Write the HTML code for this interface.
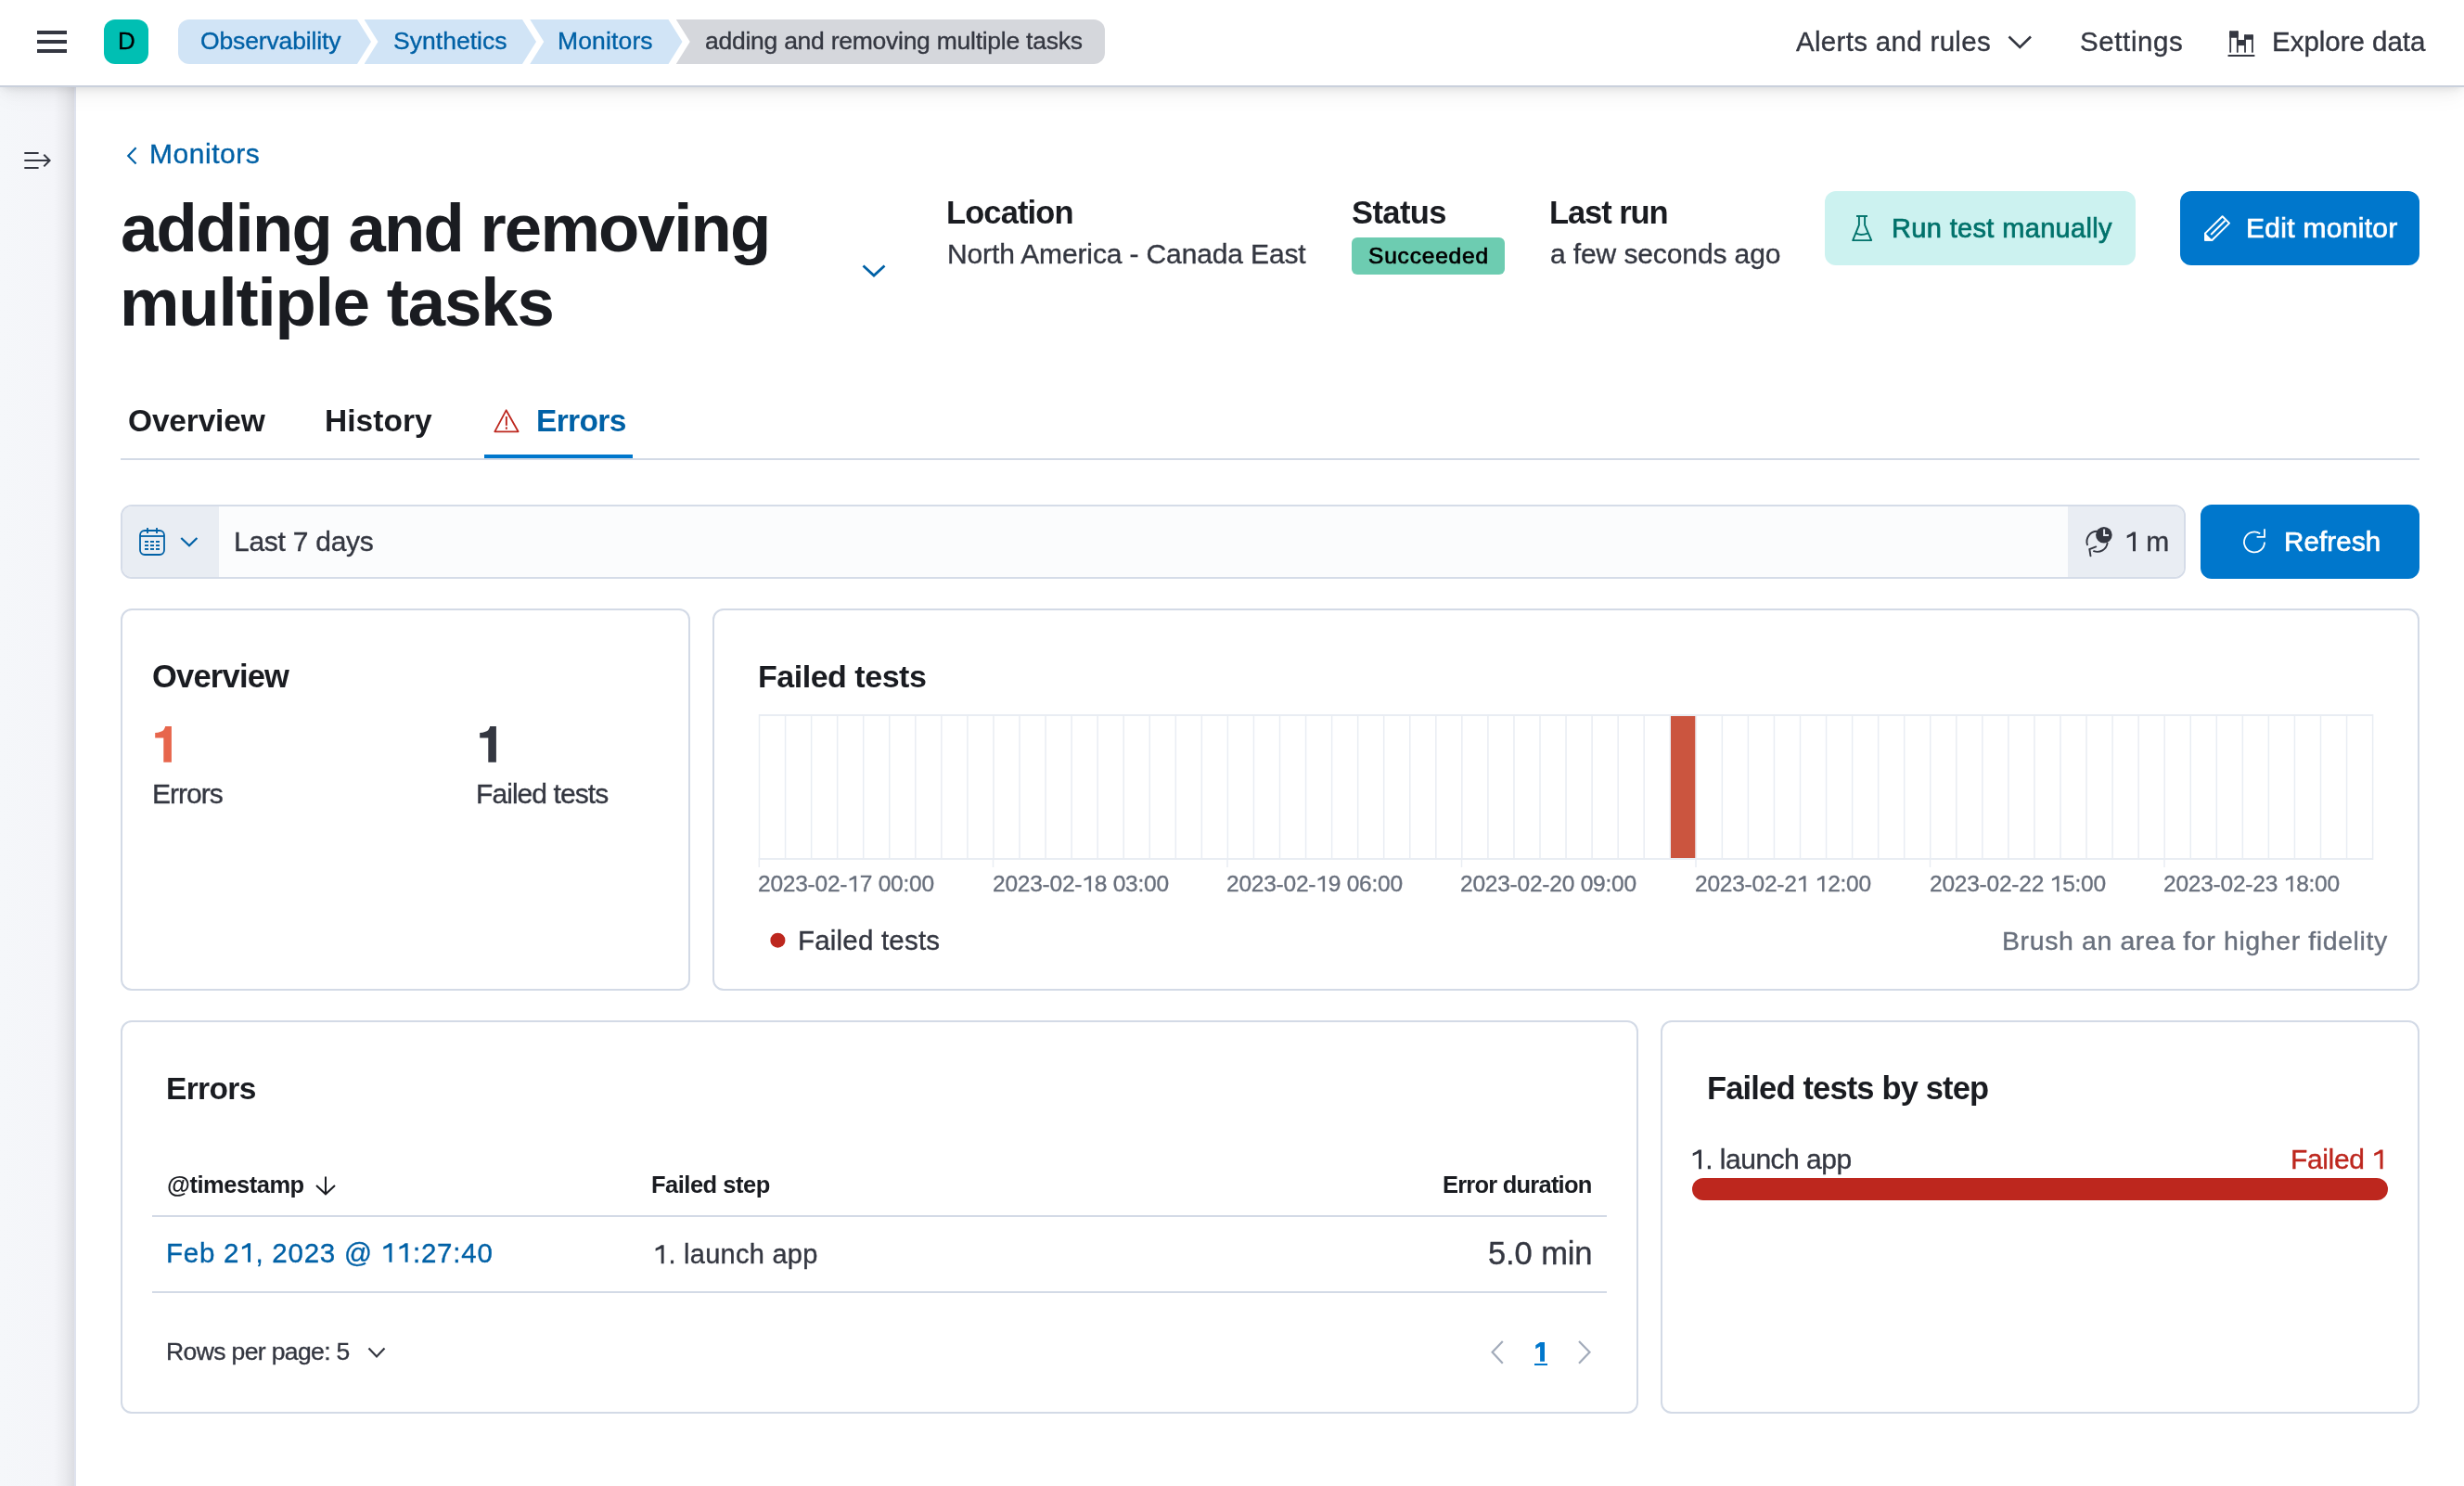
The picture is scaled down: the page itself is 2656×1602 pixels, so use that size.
<!DOCTYPE html>
<html><head><meta charset="utf-8"><title>Synthetics - Errors</title>
<style>
html,body{margin:0;padding:0;background:#ffffff;overflow:hidden}
#root{position:relative;width:2656px;height:1602px;overflow:hidden;background:#ffffff;font-family:"Liberation Sans",sans-serif}
@media (max-width:1500px){#root{zoom:0.5}}
.a{position:absolute}
.t{position:absolute;white-space:nowrap;font-family:"Liberation Sans",sans-serif;will-change:transform}
.one,.oneb{position:relative;color:transparent;-webkit-text-stroke:0}
.one::after,.oneb::after{content:"";position:absolute;left:0;top:0;width:0.56em;height:1em;background:var(--c)}
.one::after{clip-path:polygon(0.30em 0.215em,0.40em 0.215em,0.40em 0.905em,0.30em 0.905em,0.30em 0.345em,0.09em 0.44em,0.09em 0.34em,0.22em 0.28em)}
.oneb::after{clip-path:polygon(0.235em 0.215em,0.37em 0.215em,0.37em 0.905em,0.235em 0.905em,0.235em 0.37em,0.07em 0.37em,0.07em 0.29em,0.16em 0.275em,0.21em 0.23em)}
svg.ov{position:absolute;left:0;top:0;z-index:5;pointer-events:none}
</style></head><body><div id="root">
<div class="a" style="left:0px;top:93px;width:82px;height:1509px;background:linear-gradient(to right,#f5f7fa 0,#f4f5f9 58px,#eaebef 70px,#dcdde2 80px);border-right:2px solid #dfe3ee;box-sizing:border-box"></div>
<div class="a" style="left:0px;top:0px;width:2656px;height:94px;background:#ffffff;border-bottom:2px solid #c9d0dc;box-sizing:border-box;box-shadow:0 2px 8px -2px rgba(0,0,0,0.10),0 5px 16px -2px rgba(0,0,0,0.06),0 12px 24px -2px rgba(0,0,0,0.04);z-index:2"></div>
<div class="a" style="left:40px;top:33px;width:32px;height:4px;background:#343741;z-index:3"></div>
<div class="a" style="left:40px;top:43px;width:32px;height:4px;background:#343741;z-index:3"></div>
<div class="a" style="left:40px;top:53px;width:32px;height:4px;background:#343741;z-index:3"></div>
<div class="a" style="left:112px;top:21px;width:48px;height:48px;background:#00bfb3;border-radius:12px;z-index:3"></div>
<div class="a" style="left:192px;top:21px;width:208px;height:48px;background:#d1e4f6;border-radius:12px 0 0 12px;clip-path:polygon(0 0,193px 0,208px 50%,193px 100%,0 100%);z-index:3"></div>
<div class="a" style="left:392.5px;top:21px;width:185.5px;height:48px;background:#d1e4f6;clip-path:polygon(0 0,170.5px 0,185.5px 50%,170.5px 100%,0 100%,15px 50%);z-index:3"></div>
<div class="a" style="left:571.25px;top:21px;width:164.25px;height:48px;background:#d1e4f6;clip-path:polygon(0 0,149.25px 0,164.25px 50%,149.25px 100%,0 100%,15px 50%);z-index:3"></div>
<div class="a" style="left:728.75px;top:21px;width:462.25px;height:48px;background:#d5d7dc;border-radius:0 12px 12px 0;clip-path:polygon(0 0,100% 0,100% 100%,0 100%,15px 50%);z-index:3"></div>
<div class="a" style="left:1457px;top:256px;width:165px;height:40px;background:#6dccb1;border-radius:6px"></div>
<div class="a" style="left:1967px;top:206px;width:335px;height:80px;background:#ccf2f0;border-radius:12px"></div>
<div class="a" style="left:2350px;top:206px;width:258px;height:80px;background:#0077cc;border-radius:12px"></div>
<div class="a" style="left:130px;top:494px;width:2478px;height:2px;background:#d3dae6;"></div>
<div class="a" style="left:522px;top:490px;width:160px;height:4px;background:#0077cc;"></div>
<div class="a" style="left:130px;top:544px;width:2226px;height:80px;background:#fbfcfd;border:2px solid #d5dce8;border-radius:12px;box-sizing:border-box;overflow:hidden"></div>
<div class="a" style="left:132px;top:546px;width:104px;height:76px;background:#e9edf3;border-radius:10px 0 0 10px"></div>
<div class="a" style="left:2229px;top:546px;width:125px;height:76px;background:#e9edf3;border-radius:0 10px 10px 0"></div>
<div class="a" style="left:2372px;top:544px;width:236px;height:80px;background:#0077cc;border-radius:12px"></div>
<div class="a" style="left:130px;top:656px;width:614px;height:412px;background:#fff;border:2px solid #d3dae6;border-radius:12px;box-sizing:border-box"></div>
<div class="a" style="left:768px;top:656px;width:1840px;height:412px;background:#fff;border:2px solid #d3dae6;border-radius:12px;box-sizing:border-box"></div>
<div class="a" style="left:130px;top:1100px;width:1636px;height:424px;background:#fff;border:2px solid #d3dae6;border-radius:12px;box-sizing:border-box"></div>
<div class="a" style="left:1790px;top:1100px;width:818px;height:424px;background:#fff;border:2px solid #d3dae6;border-radius:12px;box-sizing:border-box"></div>
<div class="a" style="left:164px;top:1310px;width:1568px;height:2px;background:#d3dae6;"></div>
<div class="a" style="left:164px;top:1392px;width:1568px;height:2px;background:#d3dae6;"></div>
<div class="a" style="left:1824px;top:1270px;width:750px;height:24px;background:#bd271e;border-radius:12px"></div>
<div class="a" style="left:1654px;top:1470px;width:14px;height:2px;background:#0077cc;"></div>
<div class="t" style="left:216px;top:27px;font-size:26.5px;line-height:34px;font-weight:400;color:#0061a6;--c:#0061a6;letter-spacing:-0.133px;-webkit-text-stroke:0.35px #0061a6;z-index:4;">Observability</div>
<div class="t" style="left:424px;top:27px;font-size:26.5px;line-height:34px;font-weight:400;color:#0061a6;--c:#0061a6;letter-spacing:0.028px;-webkit-text-stroke:0.35px #0061a6;z-index:4;">Synthetics</div>
<div class="t" style="left:601px;top:27px;font-size:26.5px;line-height:34px;font-weight:400;color:#0061a6;--c:#0061a6;letter-spacing:0.143px;-webkit-text-stroke:0.35px #0061a6;z-index:4;">Monitors</div>
<div class="t" style="left:760px;top:27px;font-size:26.5px;line-height:34px;font-weight:400;color:#343741;--c:#343741;letter-spacing:-0.258px;-webkit-text-stroke:0.35px #343741;z-index:4;">adding and removing multiple tasks</div>
<div class="t" style="left:1936px;top:26px;font-size:29.5px;line-height:38px;font-weight:400;color:#343741;--c:#343741;letter-spacing:0.317px;-webkit-text-stroke:0.35px #343741;z-index:4;">Alerts and rules</div>
<div class="t" style="left:2242px;top:26px;font-size:29.5px;line-height:38px;font-weight:400;color:#343741;--c:#343741;letter-spacing:0.607px;-webkit-text-stroke:0.35px #343741;z-index:4;">Settings</div>
<div class="t" style="left:2449px;top:26px;font-size:29.5px;line-height:38px;font-weight:400;color:#343741;--c:#343741;letter-spacing:-0.018px;-webkit-text-stroke:0.35px #343741;z-index:4;">Explore data</div>
<div class="t" style="left:127px;top:27px;font-size:26.0px;line-height:34px;font-weight:400;color:#000000;--c:#000000;letter-spacing:0px;-webkit-text-stroke:0.35px #000000;z-index:4;">D</div>
<div class="t" style="left:161px;top:146px;font-size:30.0px;line-height:39px;font-weight:400;color:#0061a6;--c:#0061a6;letter-spacing:0.536px;-webkit-text-stroke:0.35px #0061a6;">Monitors</div>
<div class="t" style="left:130px;top:199px;font-size:72.5px;line-height:94px;font-weight:700;color:#1a1c21;--c:#1a1c21;letter-spacing:-1.764px;">adding and removing</div>
<div class="t" style="left:129px;top:279px;font-size:72.5px;line-height:94px;font-weight:700;color:#1a1c21;--c:#1a1c21;letter-spacing:-1.135px;">multiple tasks</div>
<div class="t" style="left:1020px;top:207px;font-size:34.5px;line-height:45px;font-weight:700;color:#1a1c21;--c:#1a1c21;letter-spacing:-0.893px;">Location</div>
<div class="t" style="left:1021px;top:254px;font-size:30.0px;line-height:39px;font-weight:400;color:#343741;--c:#343741;letter-spacing:-0.135px;-webkit-text-stroke:0.35px #343741;">North America - Canada East</div>
<div class="t" style="left:1457px;top:207px;font-size:34.5px;line-height:45px;font-weight:700;color:#1a1c21;--c:#1a1c21;letter-spacing:-0.6px;">Status</div>
<div class="t" style="left:1475px;top:260px;font-size:24.5px;line-height:32px;font-weight:400;color:#000000;--c:#000000;letter-spacing:0.812px;-webkit-text-stroke:0.7px #000000;">Succeeded</div>
<div class="t" style="left:1670px;top:207px;font-size:34.5px;line-height:45px;font-weight:700;color:#1a1c21;--c:#1a1c21;letter-spacing:-1.071px;">Last run</div>
<div class="t" style="left:1671px;top:254px;font-size:30.0px;line-height:39px;font-weight:400;color:#343741;--c:#343741;letter-spacing:-0.109px;-webkit-text-stroke:0.35px #343741;">a few seconds ago</div>
<div class="t" style="left:2039px;top:227px;font-size:29.0px;line-height:38px;font-weight:400;color:#00726b;--c:#00726b;letter-spacing:0.344px;-webkit-text-stroke:0.7px #00726b;">Run test manually</div>
<div class="t" style="left:2421px;top:226px;font-size:30.0px;line-height:39px;font-weight:400;color:#ffffff;--c:#ffffff;letter-spacing:0.291px;-webkit-text-stroke:0.7px #ffffff;">Edit monitor</div>
<div class="t" style="left:138px;top:432px;font-size:33.5px;line-height:44px;font-weight:700;color:#1a1c21;--c:#1a1c21;letter-spacing:-0.179px;">Overview</div>
<div class="t" style="left:350px;top:432px;font-size:33.5px;line-height:44px;font-weight:700;color:#1a1c21;--c:#1a1c21;letter-spacing:0.042px;">History</div>
<div class="t" style="left:578px;top:432px;font-size:33.5px;line-height:44px;font-weight:700;color:#0061a6;--c:#0061a6;letter-spacing:-0.65px;">Errors</div>
<div class="t" style="left:252px;top:564px;font-size:30.0px;line-height:39px;font-weight:400;color:#343741;--c:#343741;letter-spacing:-0.26px;-webkit-text-stroke:0.35px #343741;">Last 7 days</div>
<div class="t" style="left:2290px;top:564px;font-size:30.0px;line-height:39px;font-weight:400;color:#343741;--c:#343741;letter-spacing:-0.95px;-webkit-text-stroke:0.35px #343741;"><span class="one">1</span> m</div>
<div class="t" style="left:2462px;top:565px;font-size:29.5px;line-height:38px;font-weight:400;color:#ffffff;--c:#ffffff;letter-spacing:0.15px;-webkit-text-stroke:0.7px #ffffff;">Refresh</div>
<div class="t" style="left:164px;top:707px;font-size:34.5px;line-height:45px;font-weight:700;color:#1a1c21;--c:#1a1c21;letter-spacing:-0.786px;">Overview</div>
<div class="t" style="left:164px;top:836px;font-size:30.0px;line-height:39px;font-weight:400;color:#343741;--c:#343741;letter-spacing:-1.0px;-webkit-text-stroke:0.35px #343741;">Errors</div>
<div class="t" style="left:513px;top:836px;font-size:30.0px;line-height:39px;font-weight:400;color:#343741;--c:#343741;letter-spacing:-0.932px;-webkit-text-stroke:0.35px #343741;">Failed tests</div>
<div class="t" style="left:817px;top:707px;font-size:34.0px;line-height:44px;font-weight:700;color:#1a1c21;--c:#1a1c21;letter-spacing:-0.477px;">Failed tests</div>
<div class="t" style="left:860px;top:995px;font-size:29.5px;line-height:38px;font-weight:400;color:#343741;--c:#343741;letter-spacing:0.2px;-webkit-text-stroke:0.35px #343741;">Failed tests</div>
<div class="t" style="left:2158px;top:996px;font-size:28.5px;line-height:37px;font-weight:400;color:#69707d;--c:#69707d;letter-spacing:0.6px;-webkit-text-stroke:0.35px #69707d;">Brush an area for higher fidelity</div>
<div class="t" style="left:179px;top:1152px;font-size:33.5px;line-height:44px;font-weight:700;color:#1a1c21;--c:#1a1c21;letter-spacing:-0.65px;">Errors</div>
<div class="t" style="left:180px;top:1261px;font-size:25.5px;line-height:33px;font-weight:700;color:#1a1c21;--c:#1a1c21;letter-spacing:-0.472px;">@timestamp</div>
<div class="t" style="left:702px;top:1261px;font-size:25.5px;line-height:33px;font-weight:700;color:#1a1c21;--c:#1a1c21;letter-spacing:-0.5px;">Failed step</div>
<div class="t" style="left:1555px;top:1261px;font-size:25.5px;line-height:33px;font-weight:700;color:#1a1c21;--c:#1a1c21;letter-spacing:-0.781px;">Error duration</div>
<div class="t" style="left:179px;top:1332px;font-size:29.5px;line-height:38px;font-weight:400;color:#0061a6;--c:#0061a6;letter-spacing:0.761px;-webkit-text-stroke:0.35px #0061a6;">Feb 2<span class="one">1</span>, 2023 @ <span class="one">1</span><span class="one">1</span>:27:40</div>
<div class="t" style="left:704px;top:1333px;font-size:29.0px;line-height:38px;font-weight:400;color:#343741;--c:#343741;letter-spacing:0.271px;-webkit-text-stroke:0.35px #343741;"><span class="one">1</span>. launch app</div>
<div class="t" style="left:1604px;top:1329px;font-size:34.5px;line-height:45px;font-weight:400;color:#343741;--c:#343741;letter-spacing:-0.1px;-webkit-text-stroke:0.35px #343741;">5.0 min</div>
<div class="t" style="left:179px;top:1440px;font-size:26.5px;line-height:34px;font-weight:400;color:#343741;--c:#343741;letter-spacing:-0.623px;-webkit-text-stroke:0.35px #343741;">Rows per page: 5</div>
<div class="t" style="left:1840px;top:1151px;font-size:34.5px;line-height:45px;font-weight:700;color:#1a1c21;--c:#1a1c21;letter-spacing:-0.842px;">Failed tests by step</div>
<div class="t" style="left:1822px;top:1230px;font-size:30.0px;line-height:39px;font-weight:400;color:#343741;--c:#343741;letter-spacing:-0.5px;-webkit-text-stroke:0.35px #343741;"><span class="one">1</span>. launch app</div>
<div class="t" style="left:2469px;top:1230px;font-size:30.0px;line-height:39px;font-weight:400;color:#bd271e;--c:#bd271e;letter-spacing:-0.357px;-webkit-text-stroke:0.35px #bd271e;">Failed <span class="one">1</span></div>
<div class="t" style="left:817px;top:937px;font-size:24.5px;line-height:32px;font-weight:400;color:#69707d;--c:#69707d;letter-spacing:-0.22px;-webkit-text-stroke:0.35px #69707d;">2023-02-<span class="one">1</span>7 00:00</div>
<div class="t" style="left:1070px;top:937px;font-size:24.5px;line-height:32px;font-weight:400;color:#69707d;--c:#69707d;letter-spacing:-0.22px;-webkit-text-stroke:0.35px #69707d;">2023-02-<span class="one">1</span>8 03:00</div>
<div class="t" style="left:1322px;top:937px;font-size:24.5px;line-height:32px;font-weight:400;color:#69707d;--c:#69707d;letter-spacing:-0.22px;-webkit-text-stroke:0.35px #69707d;">2023-02-<span class="one">1</span>9 06:00</div>
<div class="t" style="left:1574px;top:937px;font-size:24.5px;line-height:32px;font-weight:400;color:#69707d;--c:#69707d;letter-spacing:-0.22px;-webkit-text-stroke:0.35px #69707d;">2023-02-20 09:00</div>
<div class="t" style="left:1827px;top:937px;font-size:24.5px;line-height:32px;font-weight:400;color:#69707d;--c:#69707d;letter-spacing:-0.22px;-webkit-text-stroke:0.35px #69707d;">2023-02-2<span class="one">1</span> <span class="one">1</span>2:00</div>
<div class="t" style="left:2080px;top:937px;font-size:24.5px;line-height:32px;font-weight:400;color:#69707d;--c:#69707d;letter-spacing:-0.22px;-webkit-text-stroke:0.35px #69707d;">2023-02-22 <span class="one">1</span>5:00</div>
<div class="t" style="left:2332px;top:937px;font-size:24.5px;line-height:32px;font-weight:400;color:#69707d;--c:#69707d;letter-spacing:-0.22px;-webkit-text-stroke:0.35px #69707d;">2023-02-23 <span class="one">1</span>8:00</div>
<svg class="ov" width="2656" height="1602" viewBox="0 0 2656 1602">
<rect x="818" y="770" width="1739.60" height="2" fill="#e9edf3"/>
<rect x="818" y="925" width="1739.60" height="2" fill="#e9edf3"/>
<rect x="817.75" y="770" width="1.5" height="157" fill="#e9edf3"/>
<rect x="845.80" y="770" width="1.5" height="157" fill="#e9edf3"/>
<rect x="873.85" y="770" width="1.5" height="157" fill="#e9edf3"/>
<rect x="901.90" y="770" width="1.5" height="157" fill="#e9edf3"/>
<rect x="929.95" y="770" width="1.5" height="157" fill="#e9edf3"/>
<rect x="958.00" y="770" width="1.5" height="157" fill="#e9edf3"/>
<rect x="986.05" y="770" width="1.5" height="157" fill="#e9edf3"/>
<rect x="1014.10" y="770" width="1.5" height="157" fill="#e9edf3"/>
<rect x="1042.15" y="770" width="1.5" height="157" fill="#e9edf3"/>
<rect x="1070.20" y="770" width="1.5" height="157" fill="#e9edf3"/>
<rect x="1098.25" y="770" width="1.5" height="157" fill="#e9edf3"/>
<rect x="1126.30" y="770" width="1.5" height="157" fill="#e9edf3"/>
<rect x="1154.35" y="770" width="1.5" height="157" fill="#e9edf3"/>
<rect x="1182.40" y="770" width="1.5" height="157" fill="#e9edf3"/>
<rect x="1210.45" y="770" width="1.5" height="157" fill="#e9edf3"/>
<rect x="1238.50" y="770" width="1.5" height="157" fill="#e9edf3"/>
<rect x="1266.55" y="770" width="1.5" height="157" fill="#e9edf3"/>
<rect x="1294.60" y="770" width="1.5" height="157" fill="#e9edf3"/>
<rect x="1322.65" y="770" width="1.5" height="157" fill="#e9edf3"/>
<rect x="1350.70" y="770" width="1.5" height="157" fill="#e9edf3"/>
<rect x="1378.75" y="770" width="1.5" height="157" fill="#e9edf3"/>
<rect x="1406.80" y="770" width="1.5" height="157" fill="#e9edf3"/>
<rect x="1434.85" y="770" width="1.5" height="157" fill="#e9edf3"/>
<rect x="1462.90" y="770" width="1.5" height="157" fill="#e9edf3"/>
<rect x="1490.95" y="770" width="1.5" height="157" fill="#e9edf3"/>
<rect x="1519.00" y="770" width="1.5" height="157" fill="#e9edf3"/>
<rect x="1547.05" y="770" width="1.5" height="157" fill="#e9edf3"/>
<rect x="1575.10" y="770" width="1.5" height="157" fill="#e9edf3"/>
<rect x="1603.15" y="770" width="1.5" height="157" fill="#e9edf3"/>
<rect x="1631.20" y="770" width="1.5" height="157" fill="#e9edf3"/>
<rect x="1659.25" y="770" width="1.5" height="157" fill="#e9edf3"/>
<rect x="1687.30" y="770" width="1.5" height="157" fill="#e9edf3"/>
<rect x="1715.35" y="770" width="1.5" height="157" fill="#e9edf3"/>
<rect x="1743.40" y="770" width="1.5" height="157" fill="#e9edf3"/>
<rect x="1771.45" y="770" width="1.5" height="157" fill="#e9edf3"/>
<rect x="1799.50" y="770" width="1.5" height="157" fill="#e9edf3"/>
<rect x="1827.55" y="770" width="1.5" height="157" fill="#e9edf3"/>
<rect x="1855.60" y="770" width="1.5" height="157" fill="#e9edf3"/>
<rect x="1883.65" y="770" width="1.5" height="157" fill="#e9edf3"/>
<rect x="1911.70" y="770" width="1.5" height="157" fill="#e9edf3"/>
<rect x="1939.75" y="770" width="1.5" height="157" fill="#e9edf3"/>
<rect x="1967.80" y="770" width="1.5" height="157" fill="#e9edf3"/>
<rect x="1995.85" y="770" width="1.5" height="157" fill="#e9edf3"/>
<rect x="2023.90" y="770" width="1.5" height="157" fill="#e9edf3"/>
<rect x="2051.95" y="770" width="1.5" height="157" fill="#e9edf3"/>
<rect x="2080.00" y="770" width="1.5" height="157" fill="#e9edf3"/>
<rect x="2108.05" y="770" width="1.5" height="157" fill="#e9edf3"/>
<rect x="2136.10" y="770" width="1.5" height="157" fill="#e9edf3"/>
<rect x="2164.15" y="770" width="1.5" height="157" fill="#e9edf3"/>
<rect x="2192.20" y="770" width="1.5" height="157" fill="#e9edf3"/>
<rect x="2220.25" y="770" width="1.5" height="157" fill="#e9edf3"/>
<rect x="2248.30" y="770" width="1.5" height="157" fill="#e9edf3"/>
<rect x="2276.35" y="770" width="1.5" height="157" fill="#e9edf3"/>
<rect x="2304.40" y="770" width="1.5" height="157" fill="#e9edf3"/>
<rect x="2332.45" y="770" width="1.5" height="157" fill="#e9edf3"/>
<rect x="2360.50" y="770" width="1.5" height="157" fill="#e9edf3"/>
<rect x="2388.55" y="770" width="1.5" height="157" fill="#e9edf3"/>
<rect x="2416.60" y="770" width="1.5" height="157" fill="#e9edf3"/>
<rect x="2444.65" y="770" width="1.5" height="157" fill="#e9edf3"/>
<rect x="2472.70" y="770" width="1.5" height="157" fill="#e9edf3"/>
<rect x="2500.75" y="770" width="1.5" height="157" fill="#e9edf3"/>
<rect x="2528.80" y="770" width="1.5" height="157" fill="#e9edf3"/>
<rect x="2556.85" y="770" width="1.5" height="157" fill="#e9edf3"/>
<rect x="817.55" y="925" width="1.5" height="10" fill="#e9edf3"/>
<rect x="1069.75" y="925" width="1.5" height="10" fill="#e9edf3"/>
<rect x="1322.25" y="925" width="1.5" height="10" fill="#e9edf3"/>
<rect x="1574.75" y="925" width="1.5" height="10" fill="#e9edf3"/>
<rect x="1827.25" y="925" width="1.5" height="10" fill="#e9edf3"/>
<rect x="2079.75" y="925" width="1.5" height="10" fill="#e9edf3"/>
<rect x="2332.25" y="925" width="1.5" height="10" fill="#e9edf3"/>
<rect x="1801" y="772" width="26.3" height="153" fill="#cb553f"/>
<circle cx="838.4" cy="1013.7" r="8" fill="#bd271e"/>
<polyline points="2165.5,39.5 2177.3,51 2189,39.5" fill="none" stroke="#343741" stroke-width="2.6"/>
<g fill="#343741"><rect x="2403.3" y="33.2" width="9.4" height="7.6" rx="1"/><rect x="2403.3" y="33.2" width="1.8" height="23.6" rx="0.9"/><rect x="2410.9" y="33.2" width="1.8" height="23.6" rx="0.9"/><rect x="2411.5" y="43" width="8.8" height="6.1"/><rect x="2419.1" y="37.2" width="9.7" height="5.6" rx="1"/><rect x="2419.1" y="37.2" width="1.8" height="19.6" rx="0.9"/><rect x="2427" y="37.2" width="1.8" height="19.6" rx="0.9"/><rect x="2401.3" y="59" width="29.3" height="2" rx="1"/></g>
<g stroke="#343741" stroke-width="2" fill="none"><line x1="26.3" y1="165" x2="41.6" y2="165"/><line x1="26.3" y1="173" x2="53" y2="173"/><line x1="26.3" y1="181" x2="41.6" y2="181"/><polyline points="47.3,166.8 53.6,173 47.3,179.4"/></g>
<polyline points="146.6,159.2 138.2,168 146.6,176.6" fill="none" stroke="#0061a6" stroke-width="2.1"/>
<polyline points="930.5,286.5 942,297 953.5,286.5" fill="none" stroke="#0061a6" stroke-width="2.8"/>
<g fill="none" stroke="#00726b" stroke-width="1.9" stroke-linejoin="round"><line x1="2001" y1="233" x2="2013" y2="233"/><polyline points="2003.9,233 2003.9,242.6 1997.2,259.1 2017.2,259.1 2010.1,242.6 2010.1,233"/><path d="M2000.4,251.3 Q2005,254.6 2013.8,251.3"/></g>
<g fill="none" stroke="#ffffff" stroke-width="2" stroke-linejoin="round"><polygon points="2377.2,251.4 2395.6,233.2 2403,240.6 2384.6,258.8 2377.2,258.8"/><line x1="2383.2" y1="253" x2="2398.6" y2="237.8"/></g><polygon points="2376.2,250.6 2376.2,259.7 2385.6,259.7" fill="#fff"/>
<g fill="none" stroke="#bd271e" stroke-width="1.8" stroke-linejoin="round"><polygon points="545.6,442.3 533.3,465.3 558.6,465.3"/></g><rect x="544.9" y="449" width="1.9" height="9.8" fill="#bd271e"/><rect x="544.9" y="460.4" width="1.9" height="2.4" fill="#bd271e"/>
<g fill="none" stroke="#0061a6" stroke-width="1.8"><rect x="151" y="572" width="26" height="26" rx="5"/><line x1="151" y1="578" x2="177" y2="578"/><line x1="159" y1="569" x2="159" y2="575"/><line x1="169" y1="569" x2="169" y2="575"/></g>
<rect x="156" y="583" width="4" height="1.9" fill="#0061a6"/>
<rect x="162" y="583" width="4" height="1.9" fill="#0061a6"/>
<rect x="168" y="583" width="4" height="1.9" fill="#0061a6"/>
<rect x="156" y="587.1" width="4" height="1.9" fill="#0061a6"/>
<rect x="162" y="587.1" width="4" height="1.9" fill="#0061a6"/>
<rect x="168" y="587.1" width="4" height="1.9" fill="#0061a6"/>
<rect x="156" y="591" width="4" height="1.9" fill="#0061a6"/>
<rect x="162" y="591" width="4" height="1.9" fill="#0061a6"/>
<rect x="168" y="591" width="4" height="1.9" fill="#0061a6"/>
<polyline points="195.3,580 204,588.3 212.4,580" fill="none" stroke="#0061a6" stroke-width="2.2"/>
<circle cx="2267.9" cy="576.8" r="8.8" fill="#343741"/><polyline points="2268.1,570.5 2268.1,577 2273,577" fill="none" stroke="#e9edf3" stroke-width="2"/><g fill="none" stroke="#343741" stroke-width="1.9" stroke-linecap="round"><path d="M2250,587.2 A11,11 0 0 1 2260.4,572.8"/><path d="M2271.6,585.6 A11,11 0 0 1 2257,594.2"/><polyline points="2259.3,589.4 2252.3,592 2253.5,599.3"/></g>
<g fill="none" stroke="#ffffff" stroke-width="1.8"><path d="M2436.2,575.3 A11,11 0 1 0 2441,584.5"/><polyline points="2432.6,578.9 2441,578.9 2441,570.3"/></g>
<path d="M178.2,783.0 L184.9,783.0 L184.9,821.7 L176.3,821.7 L176.3,795.6 L167.2,795.6 L167.2,790.0 Q173.6,789.4 176.2,787.2 Q177.6,785.6 178.2,783 Z" fill="#e7664c"/>
<path d="M528.2,783.0 L534.9,783.0 L534.9,821.7 L526.3,821.7 L526.3,795.6 L517.2,795.6 L517.2,790.0 Q523.6,789.4 526.2,787.2 Q527.6,785.6 528.2,783 Z" fill="#343741"/>
<polygon points="1660.1,1447 1665,1447 1665,1467.7 1660.1,1467.7 1660.1,1451.6 1655.3,1454.3 1655.3,1450.2" fill="#0077cc"/>
<g fill="none" stroke="#1a1c21" stroke-width="2"><line x1="351" y1="1268.5" x2="351" y2="1287"/><polyline points="341,1278 351,1287.3 361,1278"/></g>
<polyline points="397.5,1453.5 406,1462.5 414.5,1453.5" fill="none" stroke="#343741" stroke-width="2.2"/>
<polyline points="1619.8,1446 1608.6,1457.8 1619.8,1469.8" fill="none" stroke="#a2abba" stroke-width="2.2"/>
<polyline points="1702,1446 1713.5,1457.8 1702,1469.8" fill="none" stroke="#a2abba" stroke-width="2.2"/>
</svg>
</div></body></html>
